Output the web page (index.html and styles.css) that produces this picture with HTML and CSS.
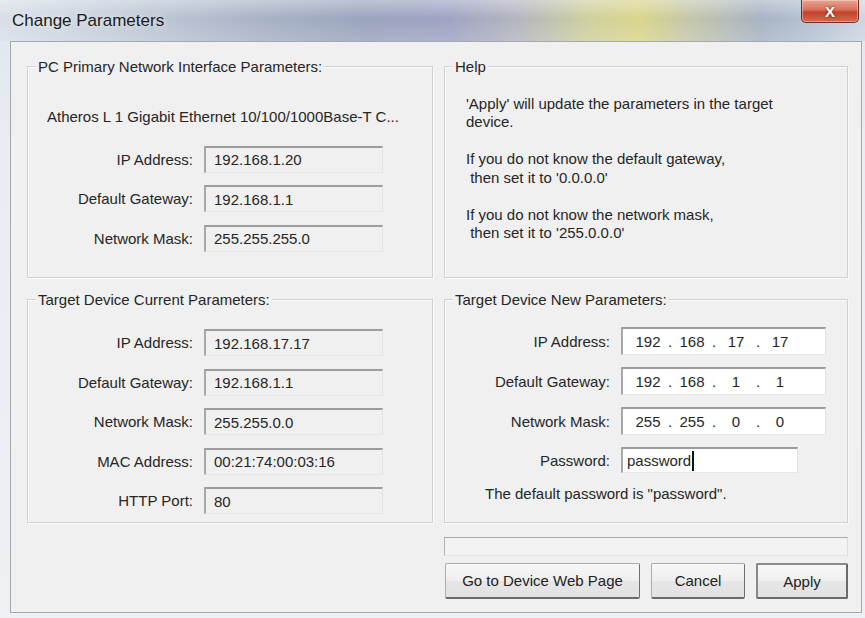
FILE: index.html
```html
<!DOCTYPE html>
<html>
<head>
<meta charset="utf-8">
<title>Change Parameters</title>
<link rel="stylesheet" href="styles.css">
</head>
<body>
<div class="window">
  <div class="titlebar">
    <span class="title">Change Parameters</span>
    <div class="close"><span>X</span></div>
  </div>
  <div class="content">
    <div class="grid">
      <div class="group g1">
        <div class="legend">PC Primary Network Interface Parameters:</div>
        <div class="adapter">Atheros L 1 Gigabit Ethernet 10/100/1000Base-T C...</div>
        <div class="rows rows-pc">
          <div class="row"><span class="label">IP Address:</span><span class="box ro">192.168.1.20</span></div>
          <div class="row"><span class="label">Default Gateway:</span><span class="box ro">192.168.1.1</span></div>
          <div class="row"><span class="label">Network Mask:</span><span class="box ro">255.255.255.0</span></div>
        </div>
      </div>
      <div class="group help">
        <div class="legend">Help</div>
        <div class="helptext">
          <p>'Apply' will update the parameters in the target<br>device.</p>
          <p>If you do not know the default gateway,<br>&nbsp;then set it to '0.0.0.0'</p>
          <p>If you do not know the network mask,<br>&nbsp;then set it to '255.0.0.0'</p>
        </div>
      </div>
      <div class="group g3 second">
        <div class="legend">Target Device Current Parameters:</div>
        <div class="rows rows-cur">
          <div class="row"><span class="label">IP Address:</span><span class="box ro">192.168.17.17</span></div>
          <div class="row"><span class="label">Default Gateway:</span><span class="box ro">192.168.1.1</span></div>
          <div class="row"><span class="label">Network Mask:</span><span class="box ro">255.255.0.0</span></div>
          <div class="row"><span class="label">MAC Address:</span><span class="box ro">00:21:74:00:03:16</span></div>
          <div class="row"><span class="label">HTTP Port:</span><span class="box ro">80</span></div>
        </div>
      </div>
      <div class="group g4 second">
        <div class="legend">Target Device New Parameters:</div>
        <div class="rows rows-new">
          <div class="row"><span class="label">IP Address:</span><span class="box ip"><span class="oct">192</span><span class="dot">.</span><span class="oct">168</span><span class="dot">.</span><span class="oct">17</span><span class="dot">.</span><span class="oct">17</span></span></div>
          <div class="row"><span class="label">Default Gateway:</span><span class="box ip"><span class="oct">192</span><span class="dot">.</span><span class="oct">168</span><span class="dot">.</span><span class="oct">1</span><span class="dot">.</span><span class="oct">1</span></span></div>
          <div class="row"><span class="label">Network Mask:</span><span class="box ip"><span class="oct">255</span><span class="dot">.</span><span class="oct">255</span><span class="dot">.</span><span class="oct">0</span><span class="dot">.</span><span class="oct">0</span></span></div>
          <div class="row pwrow"><span class="label">Password:</span><span class="box pw"><span class="caret">password</span></span></div>
        </div>
        <div class="hint">The default password is "password".</div>
      </div>
      <div class="footer">
        <div class="progress"></div>
        <div class="buttons">
          <button class="btn wide">Go to Device Web Page</button>
          <button class="btn cancel">Cancel</button>
          <button class="btn apply">Apply</button>
        </div>
      </div>
    </div>
  </div>
</div>
</body>
</html>
```

FILE: styles.css
```css
* { box-sizing: border-box; }
html, body { margin: 0; padding: 0; }
body {
  width: 865px;
  height: 618px;
  overflow: hidden;
  font-family: "Liberation Sans", Arial, sans-serif;
  background: #e9edf2;
}
.window {
  width: 865px;
  height: 618px;
  display: flex;
  flex-direction: column;
  background: linear-gradient(180deg, #dfe5ec 0%, #e8ecf1 20%, #eef1f4 100%);
}
.titlebar {
  height: 41px;
  flex: none;
  display: flex;
  align-items: flex-start;
  justify-content: space-between;
  background:
    linear-gradient(180deg, rgba(255,255,255,0.35) 0%, rgba(255,255,255,0) 45%, rgba(255,255,255,0.15) 100%),
    linear-gradient(90deg, #d9dfe8 0%, #c3ccd9 14%, #a9b3c6 30%, #9aa4bd 42%, #a0a3c4 52%, #b4b6bf 60%, #ced09e 68%, #d9d58c 74%, #c3c5ac 80%, #a8b3c4 88%, #b6c2d3 94%, #cdd6e2 100%);
}
.title {
  margin: 11px 0 0 12px;
  font-size: 17px;
  line-height: 20px;
  color: #1b1b1b;
  text-shadow: 0 0 6px rgba(255,255,255,0.8);
}
.close {
  width: 58px;
  height: 23px;
  margin: 0 6px 0 0;
  border: 1px solid #7a2a1c;
  border-top: none;
  border-radius: 0 0 5px 5px;
  background: linear-gradient(180deg, #e9a493 0%, #d8715b 45%, #c2432b 55%, #d8684c 100%);
  display: flex;
  align-items: center;
  justify-content: center;
  box-shadow: inset 0 0 0 1px rgba(255,255,255,0.35);
}
.close span {
  color: #fff;
  font-weight: bold;
  font-size: 15px;
  line-height: 15px;
  text-shadow: 0 0 3px #6b1a0c;
}
.content {
  flex: none;
  margin: 0 3px 0 10px;
  height: 572px;
  background: #f0f0f0;
  border: 1px solid #a3a9b0;
  padding: 24px 0 0 16px;
  color: #262626;
  font-size: 15px;
}
.grid {
  display: grid;
  grid-template-columns: 406px 404px;
  grid-template-rows: 212px 245px auto;
  column-gap: 11px;
  row-gap: 0;
}
.group {
  border: 1px solid #d0d0d0;
  box-shadow: inset 1px 1px 0 #fbfbfb, 1px 1px 0 #fbfbfb;
}
.second { margin-top: 21px; }
.legend {
  display: table;
  margin: -9px 0 0 8px;
  padding: 0 2px;
  line-height: 17px;
  background: #f0f0f0;
}
.adapter {
  margin: 33px 0 0 19px;
  line-height: 17px;
}
.rows {
  display: flex;
  flex-direction: column;
  gap: 12.5px;
}
.rows-pc { margin-top: 20.5px; }
.rows-cur { margin-top: 21px; }
.rows-new { margin-top: 19px; gap: 12px; }
.row {
  display: grid;
  grid-template-columns: 165px auto;
  column-gap: 11px;
  align-items: center;
}
.label {
  text-align: right;
  white-space: nowrap;
}
.box {
  display: flex;
  align-items: center;
  height: 27px;
  width: 179px;
  padding-left: 8px;
  border-top: 2px solid #9c9c9c;
  border-left: 2px solid #a8a8a8;
  border-right: 1px solid #e2e2e2;
  border-bottom: 1px solid #e6e6e6;
  background: #f0f0f0;
  white-space: nowrap;
}
.ip {
  width: 205px;
  height: 28px;
  background: #fff;
  padding-left: 8px;
}
.oct {
  width: 34px;
  text-align: center;
}
.dot {
  width: 10px;
  text-align: center;
}
.pw {
  width: 177px;
  height: 26px;
  background: #fff;
  padding-left: 4px;
}
.caret {
  border-right: 2px solid #111;
  padding-right: 1px;
  line-height: 20px;
}
.hint {
  margin: 12px 0 0 40px;
  line-height: 17px;
}
.helptext {
  margin: 19.5px 0 0 21px;
  line-height: 18.5px;
}
.helptext p { margin: 0 0 18.5px 0; }
.footer {
  grid-column: 2;
  margin-top: 14px;
  display: flex;
  flex-direction: column;
}
.progress {
  height: 19px;
  width: 404px;
  border-top: 1px solid #a9a9a9;
  border-left: 1px solid #b3b3b3;
  border-right: 1px solid #dedede;
  border-bottom: 1px solid #e3e3e3;
  background: #f3f3f3;
}
.buttons {
  margin-top: 7px;
  display: flex;
  justify-content: flex-end;
  gap: 11px;
}
.btn {
  height: 36px;
  font-family: "Liberation Sans", Arial, sans-serif;
  font-size: 15px;
  color: #222;
  padding: 0;
  border: 1px solid #adadad;
  border-right-color: #6e6e6e;
  border-bottom: 2px solid #6a6a6a;
  border-radius: 2px;
  background: linear-gradient(180deg, #f7f7f7 0%, #efefef 50%, #e6e6e6 51%, #e2e2e2 100%);
}
.wide { width: 195px; }
.cancel { width: 94px; }
.apply {
  width: 92px;
  border: 2px solid #6a6a6a;
  border-top-color: #8a8a8a;
  border-left-color: #8a8a8a;
}
```
